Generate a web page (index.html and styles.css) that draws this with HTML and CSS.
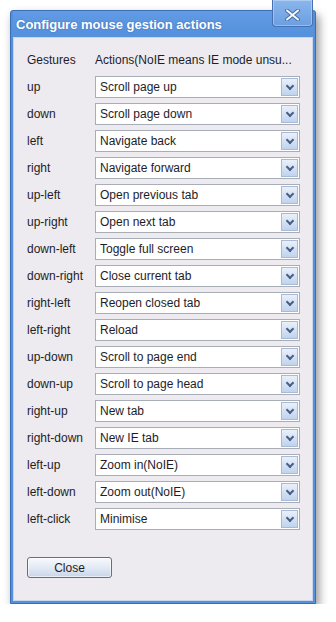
FILE: index.html
```html
<!DOCTYPE html>
<html lang="en">
<head>
    <meta charset="UTF-8">
    <title>Configure mouse gestion actions</title>
    <link rel="stylesheet" href="styles.css">
</head>
<body>
    <div class="window">
        <div class="titlebar">
            <span class="title">Configure mouse gestion actions</span>
        </div>
        <div class="close-x">
            <svg width="17" height="12" viewBox="0 0 17 12">
                <path d="M3 1.5 L14 10.5 M14 1.5 L3 10.5" stroke="#4a6ea3" stroke-width="4" stroke-linecap="round"/>
                <path d="M3 1.5 L14 10.5 M14 1.5 L3 10.5" stroke="#f4f8fd" stroke-width="2" stroke-linecap="round"/>
            </svg>
        </div>
        <div class="client">
            <div class="grid">
                <div class="label">Gestures</div>
                <div class="head">Actions(NoIE means IE mode unsu...</div>

                <div class="label">up</div>
                <div class="combo"><span>Scroll page up</span><i class="arrow"></i></div>
                <div class="label">down</div>
                <div class="combo"><span>Scroll page down</span><i class="arrow"></i></div>
                <div class="label">left</div>
                <div class="combo"><span>Navigate back</span><i class="arrow"></i></div>
                <div class="label">right</div>
                <div class="combo"><span>Navigate forward</span><i class="arrow"></i></div>
                <div class="label">up-left</div>
                <div class="combo"><span>Open previous tab</span><i class="arrow"></i></div>
                <div class="label">up-right</div>
                <div class="combo"><span>Open next tab</span><i class="arrow"></i></div>
                <div class="label">down-left</div>
                <div class="combo"><span>Toggle full screen</span><i class="arrow"></i></div>
                <div class="label">down-right</div>
                <div class="combo"><span>Close current tab</span><i class="arrow"></i></div>
                <div class="label">right-left</div>
                <div class="combo"><span>Reopen closed tab</span><i class="arrow"></i></div>
                <div class="label">left-right</div>
                <div class="combo"><span>Reload</span><i class="arrow"></i></div>
                <div class="label">up-down</div>
                <div class="combo"><span>Scroll to page end</span><i class="arrow"></i></div>
                <div class="label">down-up</div>
                <div class="combo"><span>Scroll to page head</span><i class="arrow"></i></div>
                <div class="label">right-up</div>
                <div class="combo"><span>New tab</span><i class="arrow"></i></div>
                <div class="label">right-down</div>
                <div class="combo"><span>New IE tab</span><i class="arrow"></i></div>
                <div class="label">left-up</div>
                <div class="combo"><span>Zoom in(NoIE)</span><i class="arrow"></i></div>
                <div class="label">left-down</div>
                <div class="combo"><span>Zoom out(NoIE)</span><i class="arrow"></i></div>
                <div class="label">left-click</div>
                <div class="combo"><span>Minimise</span><i class="arrow"></i></div>
            </div>
            <button class="btn">Close</button>
        </div>
    </div>
</body>
</html>
```

FILE: styles.css
```css
body {
    margin: 0;
    padding: 10px 0 0 10px;
    background: #ffffff;
    font-family: 'Liberation Sans', Arial, sans-serif;
    font-size: 12px;
    color: #1d1d28;
}
.window {
    position: relative;
    width: 306px;
    height: 594px;
    box-sizing: border-box;
    background: #5590dc;
    border: 1px solid #3a6fb8;
    border-radius: 3px 3px 0 0;
    padding: 0 2px 2px 2px;
    display: flex;
    flex-direction: column;
    box-shadow: 3px 5px 10px rgba(0, 0, 0, 0.42);
}
.titlebar {
    height: 26px;
    display: flex;
    align-items: center;
    padding-left: 3px;
    background: linear-gradient(to bottom, #629be4, #5490dc);
}
.title {
    color: #ffffff;
    font-weight: bold;
    font-size: 13px;
    text-shadow: 0 0 2px rgba(30, 60, 120, 0.45);
}
.close-x {
    position: absolute;
    top: -11px;
    right: 2px;
    width: 41px;
    height: 27px;
    box-sizing: border-box;
    border: 1px solid #4670ae;
    border-top: none;
    border-radius: 0 0 4px 4px;
    background: linear-gradient(to bottom, #8ab6ec, #6a9fe2);
    box-shadow: inset 0 0 0 1px rgba(255, 255, 255, 0.3);
    display: flex;
    align-items: flex-end;
    justify-content: center;
    padding-bottom: 5px;
}
.client {
    flex: 1;
    background: #edebf0;
    border: 1px solid #c9d6ea;
    padding: 11px 12px 0 13px;
}
.grid {
    display: grid;
    grid-template-columns: 68px 205px;
    grid-auto-rows: 22px;
    row-gap: 5px;
}
.label, .head {
    display: flex;
    align-items: center;
    white-space: nowrap;
}
.combo {
    display: flex;
    align-items: center;
    justify-content: space-between;
    background: #ffffff;
    border: 1px solid #a8aeb8;
    padding: 0 1px 0 4px;
}
.arrow {
    width: 17px;
    height: 18px;
    box-sizing: border-box;
    border: 1px solid #a9bad4;
    background: linear-gradient(to bottom, #e9f0fa, #c0d3ee);
    position: relative;
}
.arrow::after {
    content: "";
    position: absolute;
    left: 5px;
    top: 4px;
    width: 4px;
    height: 4px;
    border-right: 2px solid #4a5f86;
    border-bottom: 2px solid #4a5f86;
    transform: rotate(45deg);
}
.btn {
    margin-top: 27px;
    width: 85px;
    height: 21px;
    font-family: 'Liberation Sans', Arial, sans-serif;
    font-size: 12px;
    color: #1d1d28;
    border: 1px solid #5c6f8c;
    border-radius: 3px;
    background: linear-gradient(to bottom, #f7f9fd 0%, #e3eaf5 50%, #c8d6ea 100%);
    box-shadow: inset 0 0 0 1px rgba(255, 255, 255, 0.6);
    padding: 0;
}
```
